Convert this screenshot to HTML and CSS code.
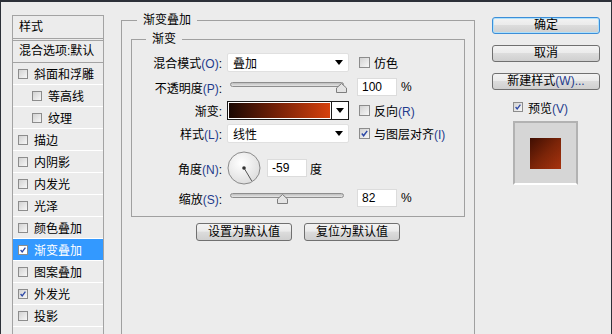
FILE: index.html
```html
<!DOCTYPE html>
<html lang="zh-CN">
<head>
    <meta charset="UTF-8">
    <meta name="viewport" content="width=device-width, initial-scale=1.0">
    <title>图层样式</title>
    <link rel="stylesheet" href="styles.css">
</head>
<body>
    <div class="dialog">
        <!-- Style list on the left -->
        <aside class="styles">
            <div class="styles-head">样式</div>
            <div class="styles-blend">混合选项:默认</div>
            <ul class="style-list">
                <li><span class="box"></span>斜面和浮雕</li>
                <li class="sub"><span class="box"></span>等高线</li>
                <li class="sub"><span class="box"></span>纹理</li>
                <li><span class="box"></span>描边</li>
                <li><span class="box"></span>内阴影</li>
                <li><span class="box"></span>内发光</li>
                <li><span class="box"></span>光泽</li>
                <li><span class="box"></span>颜色叠加</li>
                <li class="on"><span class="box checked"><svg viewBox="0 0 10 10"><path d="M2 5 L4 7.5 L8 2" /></svg></span>渐变叠加</li>
                <li><span class="box"></span>图案叠加</li>
                <li><span class="box checked"><svg viewBox="0 0 10 10"><path d="M2 5 L4 7.5 L8 2" /></svg></span>外发光</li>
                <li><span class="box"></span>投影</li>
                <li></li>
            </ul>
        </aside>

        <!-- Gradient overlay settings -->
        <fieldset class="group effect">
            <legend>渐变叠加</legend>
            <fieldset class="group gradient-set">
                <legend>渐变</legend>

                <div class="row">
                    <span class="lbl">混合模式<span class="key">(O)</span>:</span>
                    <div class="ctl select"><span>叠加</span><span class="caret"></span></div>
                    <label class="aux"><span class="box big"></span><span>仿色</span></label>
                </div>

                <div class="row r-opacity">
                    <span class="lbl">不透明度<span class="key">(P)</span>:</span>
                    <div class="ctl">
                        <div class="slider">
                            <div class="track"></div>
                            <svg class="thumb" style="left: 106px;" viewBox="0 0 11 10"><path d="M0.5 9.5 V5 L5.5 0.5 L10.5 5 V9.5 Z" /></svg>
                        </div>
                    </div>
                    <div class="num">100</div>
                    <span class="unit">%</span>
                </div>

                <div class="row r-tight">
                    <span class="lbl">渐变:</span>
                    <div class="ctl grad">
                        <div class="grad-fill"></div>
                        <div class="grad-drop"><span class="caret"></span></div>
                    </div>
                    <label class="aux"><span class="box big"></span><span>反向<span class="key">(R)</span></span></label>
                </div>

                <div class="row r-tight">
                    <span class="lbl">样式<span class="key">(L)</span>:</span>
                    <div class="ctl select"><span>线性</span><span class="caret"></span></div>
                    <label class="aux"><span class="box big checked"><svg viewBox="0 0 10 10"><path d="M2 5 L4 7.5 L8 2" /></svg></span><span>与图层对齐<span class="key">(I)</span></span></label>
                </div>

                <div class="row r-angle">
                    <span class="lbl">角度<span class="key">(N)</span>:</span>
                    <div class="ctl angle">
                        <svg class="dial" viewBox="0 0 34 34">
                            <defs>
                                <radialGradient id="dialFill" cx="40%" cy="35%" r="70%">
                                    <stop offset="0" stop-color="#ffffff" />
                                    <stop offset="1" stop-color="#dcdcdc" />
                                </radialGradient>
                            </defs>
                            <circle cx="17" cy="17" r="16" fill="url(#dialFill)" stroke="#8a8a8a" />
                            <line x1="17" y1="17" x2="24.7" y2="29.9" stroke="#555" stroke-width="1" />
                            <circle cx="17" cy="17" r="1.8" fill="#333" />
                        </svg>
                        <div class="num">-59</div>
                        <span class="unit">度</span>
                    </div>
                </div>

                <div class="row r-tight">
                    <span class="lbl">缩放<span class="key">(S)</span>:</span>
                    <div class="ctl">
                        <div class="slider">
                            <div class="track"></div>
                            <svg class="thumb" style="left: 47px;" viewBox="0 0 11 10"><path d="M0.5 9.5 V5 L5.5 0.5 L10.5 5 V9.5 Z" /></svg>
                        </div>
                    </div>
                    <div class="num">82</div>
                    <span class="unit">%</span>
                </div>
            </fieldset>

            <div class="defaults">
                <button class="btn">设置为默认值</button>
                <button class="btn">复位为默认值</button>
            </div>
        </fieldset>

        <!-- Dialog actions -->
        <div class="actions">
            <button class="btn wide primary">确定</button>
            <button class="btn wide">取消</button>
            <button class="btn wide">新建样式<span class="key">(W)...</span></button>
            <label class="preview-check"><span class="box checked"><svg viewBox="0 0 10 10"><path d="M2 5 L4 7.5 L8 2" /></svg></span><span>预览<span class="key">(V)</span></span></label>
            <div class="preview">
                <div class="swatch"></div>
            </div>
        </div>
    </div>
</body>
</html>
```

FILE: styles.css
```css
body, html {
    margin: 0;
    padding: 0;
    font-family: "Liberation Sans", "Noto Sans CJK SC", sans-serif;
    font-size: 12px;
    color: #000;
}

/* Dialog frame */
.dialog {
    width: 612px;
    height: 334px;
    box-sizing: border-box;
    border: 1px solid #2c3038;
    border-top-width: 2px;
    border-bottom: none;
    background-color: #ececec;
    display: flex;
    align-items: flex-start;
    overflow: hidden;
}

.key {
    color: #1f3b8c;
}

/* Checkboxes */
.box {
    width: 10px;
    height: 10px;
    box-sizing: border-box;
    border: 1px solid #8c8c8c;
    background: linear-gradient(135deg, #d2d2d2, #f7f7f7);
    flex-shrink: 0;
    display: flex;
}

.box.big {
    width: 11px;
    height: 11px;
}

.box svg {
    width: 100%;
    height: 100%;
}

.box svg path {
    fill: none;
    stroke: #2b47a6;
    stroke-width: 1.6;
}

/* Left style list */
.styles {
    margin: 13px 0 0 11px;
    width: 92px;
    height: 340px;
    box-sizing: border-box;
    border: 1px solid #a3a3a3;
    flex-shrink: 0;
}

.styles-head {
    height: 22px;
    line-height: 22px;
    padding-left: 6px;
    border-bottom: 1px solid #a3a3a3;
}

.styles-blend {
    margin-top: 1px;
    height: 21px;
    line-height: 21px;
    padding-left: 6px;
    border-top: 1px solid #a3a3a3;
    border-bottom: 1px solid #a3a3a3;
    white-space: nowrap;
}

.style-list {
    list-style: none;
    margin: 0;
    padding: 0;
}

.style-list li {
    height: 21px;
    border-bottom: 1px solid #fff;
    display: flex;
    align-items: center;
    gap: 6px;
    padding-left: 5px;
    white-space: nowrap;
}

.style-list li.sub {
    padding-left: 19px;
}

.style-list li.on {
    background-color: #3399ff;
    color: #fff;
}

.style-list li.on .box {
    background: #fff;
}

/* Group boxes */
.group {
    margin: 0;
    padding: 0;
    min-width: 0;
    border: 1px solid #a0a0a0;
}

.group legend {
    padding: 0 6px;
    line-height: 13px;
}

.effect {
    margin: 12px 0 0 17px;
    width: 354px;
    height: 330px;
    box-sizing: border-box;
    padding: 0 9px;
    flex-shrink: 0;
}

.effect > legend {
    margin-left: 6px;
}

.gradient-set {
    margin-top: 6px;
    padding: 6px 0 8px;
}

.gradient-set > legend {
    margin-left: 14px;
}

/* Setting rows */
.row {
    display: flex;
    align-items: center;
    height: 20px;
}

.row.r-opacity {
    margin-top: 5px;
}

.row.r-tight {
    margin-top: 3px;
}

.row.r-angle {
    margin-top: 8px;
    height: 34px;
}

.lbl {
    width: 90px;
    margin-right: 5px;
    text-align: right;
    white-space: nowrap;
    flex-shrink: 0;
}

.ctl {
    width: 122px;
    flex-shrink: 0;
}

.aux {
    margin-left: 10px;
    display: flex;
    align-items: center;
    gap: 4px;
    white-space: nowrap;
}

.select {
    height: 19px;
    box-sizing: border-box;
    background-color: #fff;
    border: 1px solid #e0e0e0;
    border-radius: 2px;
    display: flex;
    align-items: center;
    justify-content: space-between;
    padding: 0 5px;
}

.caret {
    width: 0;
    height: 0;
    border-left: 4px solid transparent;
    border-right: 4px solid transparent;
    border-top: 5px solid #000;
}

/* Sliders */
.slider {
    position: relative;
    margin-left: 3px;
    width: 114px;
    height: 12px;
}

.track {
    margin-top: 1px;
    height: 5px;
    box-sizing: border-box;
    border: 1px solid #8e8e8e;
    border-radius: 3px;
    background: linear-gradient(#bdbdbd, #e6e6e6);
}

.thumb {
    position: absolute;
    top: 1px;
    width: 11px;
    height: 10px;
}

.thumb path {
    fill: #e4e4e4;
    stroke: #7e7e7e;
    stroke-width: 1;
}

.num {
    width: 40px;
    height: 18px;
    box-sizing: border-box;
    margin-left: 8px;
    padding-left: 4px;
    line-height: 16px;
    background-color: #fff;
    border: 1px solid #dcdcdc;
    flex-shrink: 0;
}

.unit {
    margin-left: 4px;
}

/* Gradient picker */
.grad {
    height: 19px;
    box-sizing: border-box;
    border: 1px solid #1a1a1a;
    display: flex;
}

.grad-fill {
    flex: 1;
    border: 1px solid #fff;
    background: linear-gradient(to right, #1a0803, #7a2207 50%, #d6410d);
}

.grad-drop {
    width: 16px;
    border-left: 1px solid #1a1a1a;
    background-color: #fff;
    display: flex;
    align-items: center;
    justify-content: center;
}

/* Angle */
.angle {
    display: flex;
    align-items: center;
}

.dial {
    width: 34px;
    height: 34px;
    flex-shrink: 0;
}

.angle .num {
    margin-left: 6px;
}

.angle .unit {
    margin-left: 3px;
}

/* Buttons */
.btn {
    width: 96px;
    height: 18px;
    box-sizing: border-box;
    padding: 0;
    border: 1px solid #707070;
    border-radius: 3px;
    background: linear-gradient(#f3f3f3, #ebebeb 45%, #dcdcdc 50%, #cfcfcf);
    font: inherit;
    line-height: 15px;
    color: #000;
    text-align: center;
    white-space: nowrap;
}

.defaults {
    display: flex;
    justify-content: center;
    gap: 12px;
    margin-top: 6px;
}

.actions {
    margin: 15px 0 0 17px;
    width: 108px;
    display: flex;
    flex-direction: column;
    flex-shrink: 0;
}

.btn.wide {
    width: 108px;
    height: 17px;
    margin-bottom: 11px;
}

.btn.primary {
    border-color: #3c8ed8;
    box-shadow: inset 0 0 0 1px #aee0fb;
}

.preview-check {
    margin-top: -1px;
    padding-left: 21px;
    height: 14px;
    display: flex;
    align-items: center;
    gap: 5px;
}

.preview {
    margin: 7px 0 0 21px;
    width: 65px;
    height: 64px;
    box-sizing: border-box;
    border: 2px solid #b2b2b2;
    border-bottom-color: #fff;
    background-color: #d6d6d6;
    display: flex;
    align-items: center;
    justify-content: center;
}

.swatch {
    width: 31px;
    height: 31px;
    background: linear-gradient(135deg, #3f0e02, #7a2408 50%, #a8330e);
}
```
